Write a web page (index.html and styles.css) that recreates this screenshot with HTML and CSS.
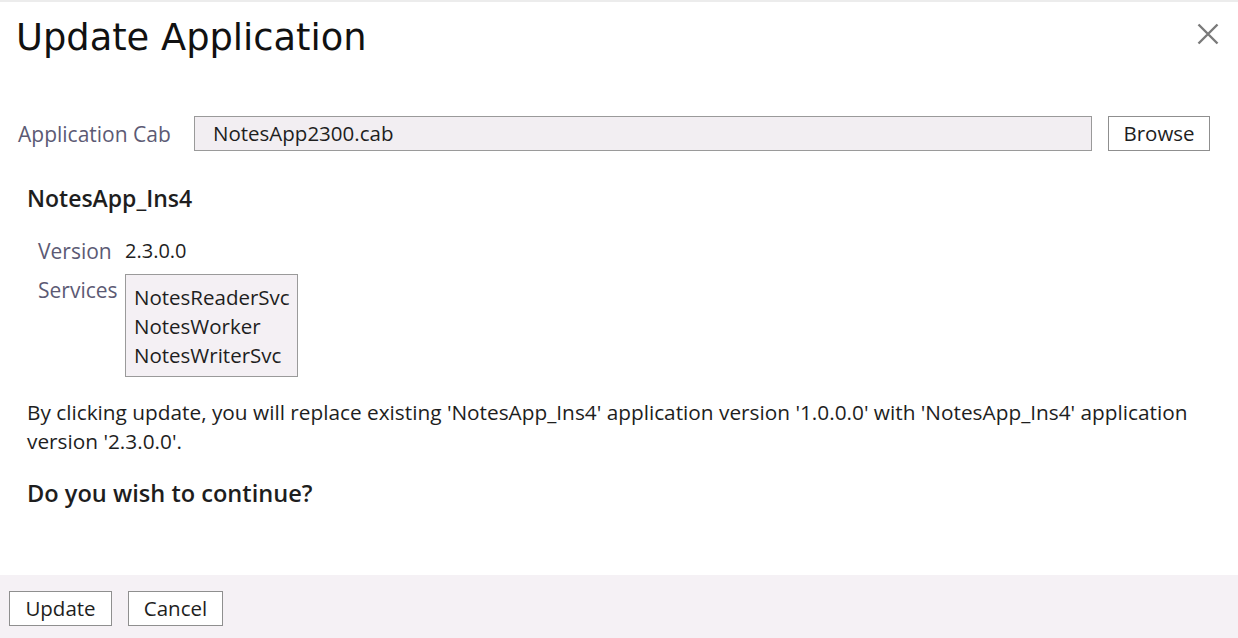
FILE: index.html
```html
<!DOCTYPE html>
<html>
<head>
<meta charset="utf-8">
<link rel="stylesheet" href="styles.css">
</head>
<body>
<div class="dialog">
  <div class="header">
    <h1 class="title">Update Application</h1>
    <button class="close" aria-label="Close">
      <svg width="22" height="22" viewBox="0 0 22 22"><path d="M1.5 1.5 L20.5 20.5 M20.5 1.5 L1.5 20.5" stroke="#7a7a7a" stroke-width="2.4" fill="none"/></svg>
    </button>
  </div>
  <div class="cab-row">
    <span class="label cab-label">Application Cab</span>
    <div class="cab-input">NotesApp2300.cab</div>
    <button class="btn browse">Browse</button>
  </div>
  <div class="details">
    <h2 class="app-name">NotesApp_Ins4</h2>
    <div class="props">
      <span class="label">Version</span>
      <span class="value">2.3.0.0</span>
      <span class="label services-label">Services</span>
      <div class="services">
        <div>NotesReaderSvc</div>
        <div>NotesWorker</div>
        <div>NotesWriterSvc</div>
      </div>
    </div>
    <p class="message">By clicking update, you will replace existing 'NotesApp_Ins4' application version '1.0.0.0' with 'NotesApp_Ins4' application version '2.3.0.0'.</p>
    <h3 class="question">Do you wish to continue?</h3>
  </div>
  <div class="footer">
    <button class="btn update">Update</button>
    <button class="btn cancel">Cancel</button>
  </div>
</div>
</body>
</html>
```
FILE: styles.css
```css
html, body {
  margin: 0;
  padding: 0;
  background: #ffffff;
}
body {
  font-family: "Open Sans", "Noto Sans", sans-serif;
  color: #1e1e1e;
}
.dialog {
  height: 638px;
  box-sizing: border-box;
  border-top: 2px solid #ececec;
  display: flex;
  flex-direction: column;
}
.header {
  display: flex;
  justify-content: space-between;
  align-items: flex-start;
  padding: 0 19px 0 16px;
}
.title {
  margin: 12px 0 0 0;
  font-family: "DejaVu Sans", Verdana, sans-serif;
  font-weight: normal;
  font-size: 36.8px;
  line-height: 48px;
  color: #111;
}
.close {
  margin-top: 21px;
  background: none;
  border: none;
  padding: 0;
  width: 22px;
  height: 22px;
  cursor: pointer;
}
.close svg { display: block; }
.cab-row {
  display: flex;
  align-items: center;
  margin-top: 54px;
  padding: 0 28px 0 18px;
}
.label {
  color: #5c5a74;
  font-size: 21px;
}
.cab-label {
  width: 176px;
  flex: none;
}
.cab-input {
  flex: 1;
  height: 35px;
  box-sizing: border-box;
  border: 1px solid #9a9a9a;
  background: #f2eef2;
  font-size: 20.5px;
  line-height: 33px;
  padding-left: 18px;
}
.btn {
  font-family: inherit;
  font-size: 20.5px;
  color: #1e1e1e;
  background: #ffffff;
  border: 1px solid #8f8f8f;
  box-sizing: border-box;
  height: 35px;
  padding: 0;
  line-height: 33px;
}
.browse {
  margin-left: 16px;
  width: 102px;
}
.details {
  padding: 0 27px;
  flex: 1;
}
.app-name {
  margin: 32px 0 0 0;
  font-size: 23px;
  font-weight: 600;
  line-height: 30px;
}
.props {
  display: grid;
  grid-template-columns: 87px auto;
  justify-content: start;
  align-items: start;
  row-gap: 8px;
  margin-top: 23px;
  margin-left: 11px;
}
.value {
  font-size: 20px;
  line-height: 30px;
}
.props .label { line-height: 30px; }
.services-label { margin-top: 1px; }
.services {
  border: 1px solid #9a9a9a;
  background: #f4f0f4;
  font-size: 20.5px;
  line-height: 29px;
  padding: 8px 8px 6px 8px;
  width: 173px;
  box-sizing: border-box;
}
.message {
  margin: 21px 0 0 0;
  font-size: 20.8px;
  line-height: 29px;
}
.question {
  margin: 21px 0 0 0;
  font-size: 23.6px;
  font-weight: 600;
  line-height: 32px;
}
.footer {
  height: 63px;
  background: #f5f1f5;
  display: flex;
  align-items: flex-start;
  padding: 16px 0 0 9px;
  box-sizing: border-box;
  gap: 16px;
}
.update { width: 103px; }
.cancel { width: 95px; }
```
